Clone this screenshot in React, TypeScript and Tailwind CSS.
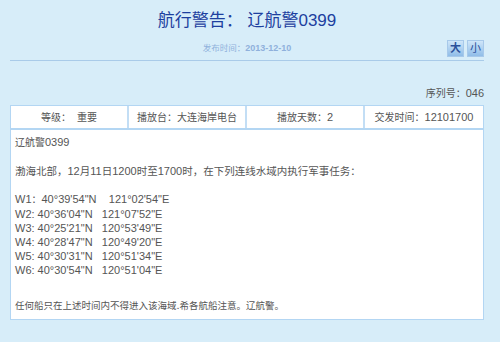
const font = "font-['Liberation_Sans','Noto_Sans_CJK_SC',sans-serif]";

// CJK glyphs in the original page render narrower than the latin digits
function Mixed({ text, cjk = "text-[10px]" }: { text: string; cjk?: string }) {
  const parts = text.split(/([\u3000-\u303f\u4e00-\u9fff\uff00-\uffef]+)/);
  return (
    <>
      {parts.map((p, i) =>
        i % 2 === 1 ? (
          <span key={i} className={cjk}>
            {p}
          </span>
        ) : (
          p
        )
      )}
    </>
  );
}

const cells = ["等级：  重要", "播放台：大连海岸电台", "播放天数：2", "交发时间：12101700"];

const points = [
  "W1：40°39'54\"N    121°02'54\"E",
  "W2: 40°36'04\"N   121°07'52\"E",
  "W3: 40°25'21\"N   120°53'49\"E",
  "W4: 40°28'47\"N   120°49'20\"E",
  "W5: 40°30'31\"N   120°51'34\"E",
  "W6: 40°30'54\"N   120°51'04\"E",
];

export default function App() {
  return (
    <div className={`w-[500px] h-[342px] bg-[#d7edf9] ${font} overflow-hidden`}>
      <div className="pl-[10px] pr-[16px]">
        <h1 className="pt-[9px] h-[34px] text-center text-[17px] leading-[24px] text-[#1d3f9f]">
          航行警告： 辽航警0399
        </h1>
        <div className="relative h-[27px] pt-[7px] border-b border-[#a9cbe9]">
          <p className="text-center text-[9px] leading-[14px] font-bold text-[#8fb1dc]">
            <Mixed text="发布时间：2013-12-10" cjk="text-[8.5px] font-normal" />
          </p>
          <div className="absolute right-0 top-[6px] flex gap-[3px]">
            <span className="w-[17px] h-[17px] flex items-center justify-center text-[11px] font-bold text-[#2a4f9a] bg-gradient-to-b from-[#cfe6f9] to-[#90bde8] border border-[#a7c9ea]">大</span>
            <span className="w-[17px] h-[17px] flex items-center justify-center text-[11px] text-[#2a4f9a] bg-gradient-to-b from-[#cfe6f9] to-[#90bde8] border border-[#a7c9ea]">小</span>
          </div>
        </div>
        <p className="mt-[24px] text-right text-[11px] leading-[16px] text-[#555]">
          <Mixed text="序列号：046" />
        </p>
        <div className="mt-[3px] border border-[#b3d6f3] bg-white text-[11px] text-[#555]">
          <div className="grid grid-cols-4 h-[24px] border-b-2 border-[#b3d6f3]">
            {cells.map((c, i) => (
              <div
                key={i}
                className={`flex items-center justify-center whitespace-pre ${i < 3 ? "border-r-2 border-[#c3def5]" : ""}`}
              >
                <span>
                  <Mixed text={c} />
                </span>
              </div>
            ))}
          </div>
          <div className="px-[4px] pt-[5px] h-[189px] leading-[14px] whitespace-pre">
            <p>
              <Mixed text="辽航警0399" />
            </p>
            <p>&nbsp;</p>
            <p>
              <Mixed text="渤海北部，12月11日1200时至1700时，在下列连线水域内执行军事任务：" cjk="text-[10.5px]" />
            </p>
            <p>&nbsp;</p>
            {points.map((p) => (
              <p key={p}>
                <Mixed text={p} />
              </p>
            ))}
            <div className="h-[21px]" />
            <p>
              <Mixed text="任何船只在上述时间内不得进入该海域.希各航船注意。辽航警。" cjk="text-[9.5px]" />
            </p>
          </div>
        </div>
      </div>
    </div>
  );
}
